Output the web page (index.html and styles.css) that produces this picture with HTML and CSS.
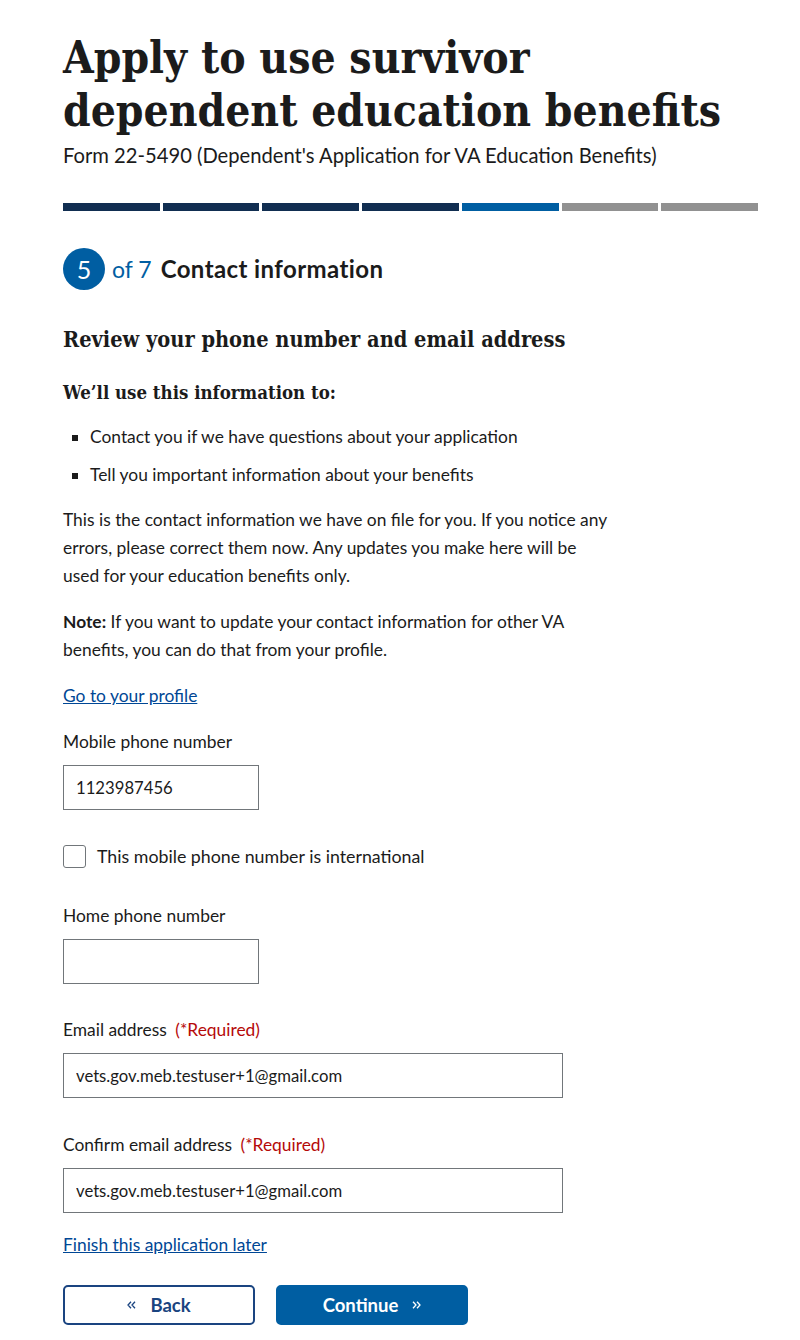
FILE: index.html
```html
<!DOCTYPE html>
<html lang="en">
<head>
<meta charset="utf-8">
<title>Apply to use survivor dependent education benefits</title>
<link rel="stylesheet" href="styles.css">
</head>
<body>
<main class="page">
  <header class="form-title">
    <h1>Apply to use survivor dependent education benefits</h1>
    <p class="subtitle">Form 22-5490 (Dependent's Application for VA Education Benefits)</p>
  </header>

  <div class="progress" aria-label="Step 5 of 7">
    <span class="seg done"></span>
    <span class="seg done"></span>
    <span class="seg done"></span>
    <span class="seg done"></span>
    <span class="seg current"></span>
    <span class="seg"></span>
    <span class="seg"></span>
  </div>

  <h2 class="step"><span class="step-num">5</span><span class="step-of">of 7</span><span class="step-name">Contact information</span></h2>

  <h3 class="section-title">Review your phone number and email address</h3>
  <h4 class="sub-title">We’ll use this information to:</h4>
  <ul class="uses">
    <li>Contact you if we have questions about your application</li>
    <li>Tell you important information about your benefits</li>
  </ul>
  <p class="prose">This is the contact information we have on file for you. If you notice any errors, please correct them now. Any updates you make here will be used for your education benefits only.</p>
  <p class="prose"><strong class="note">Note:</strong> If you want to update your contact information for other VA benefits, you can do that from your profile.</p>
  <p class="prose"><a href="#" class="link">Go to your profile</a></p>

  <div class="field">
    <label class="label" for="mobile">Mobile phone number</label>
    <input class="input short" id="mobile" type="text" value="1123987456">
  </div>

  <label class="check">
    <span class="box"></span>
    <span>This mobile phone number is international</span>
  </label>

  <div class="field">
    <label class="label" for="home">Home phone number</label>
    <input class="input short" id="home" type="text" value="">
  </div>

  <div class="field">
    <label class="label" for="email">Email address <span class="req">(*Required)</span></label>
    <input class="input long" id="email" type="text" value="vets.gov.meb.testuser+1@gmail.com">
  </div>

  <div class="field">
    <label class="label" for="email2">Confirm email address <span class="req">(*Required)</span></label>
    <input class="input long" id="email2" type="text" value="vets.gov.meb.testuser+1@gmail.com">
  </div>

  <p class="finish"><a href="#" class="link">Finish this application later</a></p>

  <div class="actions">
    <button class="btn btn-back" type="button">
      <svg class="chev" width="9" height="8" viewBox="0 0 9 8" aria-hidden="true"><path d="M4 0.7 L1 4 L4 7.3 M8 0.7 L5 4 L8 7.3" fill="none" stroke="currentColor" stroke-width="1.3"/></svg>
      <span>Back</span>
    </button>
    <button class="btn btn-continue" type="button">
      <span>Continue</span>
      <svg class="chev" width="9" height="8" viewBox="0 0 9 8" aria-hidden="true"><path d="M1 0.7 L4 4 L1 7.3 M5 0.7 L8 4 L5 7.3" fill="none" stroke="currentColor" stroke-width="1.3"/></svg>
    </button>
  </div>
</main>
</body>
</html>
```
FILE: styles.css
```css
* { box-sizing: border-box; }

html, body {
  margin: 0;
  padding: 0;
  background: #ffffff;
}

body {
  font-family: Lato, "Liberation Sans", sans-serif;
  font-size: 17.4px;
  line-height: 28px;
  color: #1b1b1b;
}

.page {
  padding: 31px 42px 40px 63px;
}

h1 {
  margin: 0;
  max-width: 680px;
  font-family: "DejaVu Serif Condensed", "DejaVu Serif", serif;
  font-weight: 700;
  font-size: 44px;
  line-height: 53px;
  color: #1b1b1b;
}

.subtitle {
  margin: 4px 0 0;
  font-size: 20.2px;
  line-height: 28px;
}

.progress {
  display: flex;
  gap: 3px;
  margin-top: 34px;
  width: 695px;
}

.seg {
  flex: 1;
  height: 8px;
  background: #919191;
}

.seg.done { background: #112e51; }
.seg.current { background: #005ea2; }

.step {
  display: flex;
  align-items: center;
  margin: 37px 0 0;
  font-size: 24px;
  line-height: 28px;
  font-weight: 700;
}

.step-num {
  width: 42px;
  height: 42px;
  border-radius: 50%;
  background: #005ea2;
  color: #ffffff;
  font-size: 25px;
  font-weight: 400;
  display: flex;
  align-items: center;
  justify-content: center;
  margin-right: 7px;
}

.step-of {
  color: #005ea2;
  font-size: 23px;
  font-weight: 400;
  margin-right: 9px;
}

.step-name {
  letter-spacing: 0.4px;
}

.section-title {
  margin: 36px 0 0;
  font-family: "DejaVu Serif Condensed", "DejaVu Serif", serif;
  font-size: 21.6px;
  line-height: 28px;
  font-weight: 700;
}

.sub-title {
  margin: 27px 0 0;
  font-family: "DejaVu Serif Condensed", "DejaVu Serif", serif;
  font-size: 18.5px;
  line-height: 24px;
  font-weight: 700;
}

.uses {
  list-style: square;
  margin: 18px 0 0;
  padding-left: 27px;
}

.uses li + li { margin-top: 10px; }

.prose {
  margin: 17px 0 0;
  max-width: 548px;
}

.prose + .prose { margin-top: 18px; }

.note {
  display: inline-block;
  font-weight: 700;
}

.link {
  color: #004795;
  text-decoration: underline;
}

.field { margin-top: 18px; }

.field + .field { margin-top: 32px; }
.field + .field + .field { margin-top: 33px; }
.check + .field { margin-top: 32px; }

.label {
  display: block;
  line-height: 28px;
}

.req { color: #b50909; margin-left: 4px; }

.input {
  display: block;
  margin-top: 9px;
  height: 45px;
  padding: 0 12px;
  border: 1px solid #71767a;
  border-radius: 0;
  font-family: Lato, "Liberation Sans", sans-serif;
  font-size: 16.7px;
  color: #1b1b1b;
  background: #ffffff;
}

.short { width: 196px; }
.long { width: 500px; }

.check {
  display: flex;
  align-items: center;
  gap: 11px;
  margin-top: 32px;
  line-height: 28px;
  font-size: 17.8px;
}

.box {
  width: 23px;
  height: 23px;
  border: 1px solid #71767a;
  border-radius: 3px;
  background: #ffffff;
}

.finish { margin: 18px 0 0; }

.actions {
  display: flex;
  gap: 21px;
  margin-top: 26px;
}

.btn {
  width: 192px;
  height: 40px;
  border-radius: 5px;
  font-family: Lato, "Liberation Sans", sans-serif;
  font-size: 18.5px;
  font-weight: 700;
  display: flex;
  align-items: center;
  justify-content: center;
  gap: 14px;
  cursor: pointer;
}

.btn-back {
  background: #ffffff;
  color: #1a4480;
  border: 2px solid #1a4480;
}

.btn-continue {
  background: #005ea2;
  color: #ffffff;
  border: 2px solid #005ea2;
}
```
